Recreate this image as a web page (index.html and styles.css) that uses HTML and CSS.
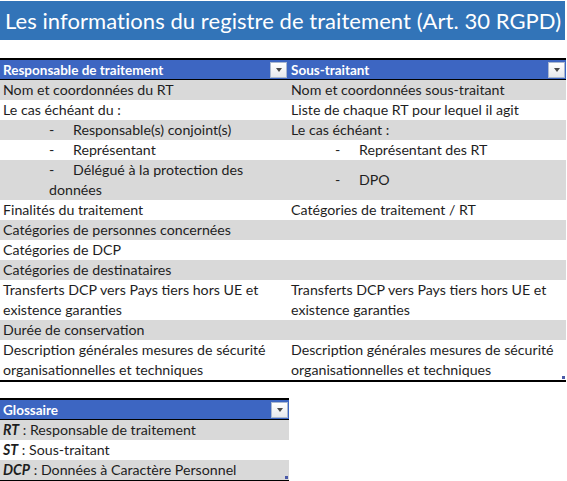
FILE: index.html
```html
<!DOCTYPE html>
<html lang="fr">
<head>
<meta charset="utf-8">
<title>Registre de traitement</title>
<link rel="stylesheet" href="styles.css">
</head>
<body>
<div class="title">Les informations du registre de traitement (Art. 30 RGPD)</div>

<table class="grid main">
  <colgroup><col class="c1"><col class="c2"></colgroup>
  <thead>
    <tr>
      <th><div class="hcell"><span>Responsable de traitement</span><span class="dd"></span></div></th>
      <th><div class="hcell"><span>Sous-traitant</span><span class="dd"></span></div></th>
    </tr>
  </thead>
  <tbody>
    <tr class="g"><td>Nom et coordonnées du RT</td><td>Nom et coordonnées sous-traitant</td></tr>
    <tr><td>Le cas échéant du :</td><td>Liste de chaque RT pour lequel il agit</td></tr>
    <tr class="g"><td class="ind"><span class="dash">-</span>Responsable(s) conjoint(s)</td><td>Le cas échéant :</td></tr>
    <tr><td class="ind"><span class="dash">-</span>Représentant</td><td class="ind2"><span class="dash">-</span>Représentant des RT</td></tr>
    <tr class="g"><td class="ind"><span class="dash">-</span>Délégué à la protection des<br>données</td><td class="ind2"><span class="dash">-</span>DPO</td></tr>
    <tr><td>Finalités du traitement</td><td>Catégories de traitement / RT</td></tr>
    <tr class="g"><td>Catégories de personnes concernées</td><td></td></tr>
    <tr><td>Catégories de DCP</td><td></td></tr>
    <tr class="g"><td>Catégories de destinataires</td><td></td></tr>
    <tr><td>Transferts DCP vers Pays tiers hors UE et<br>existence garanties</td><td>Transferts DCP vers Pays tiers hors UE et<br>existence garanties</td></tr>
    <tr class="g"><td>Durée de conservation</td><td></td></tr>
    <tr><td>Description générales mesures de sécurité<br>organisationnelles et techniques</td><td class="last">Description générales mesures de sécurité<br>organisationnelles et techniques<span class="grip"></span></td></tr>
  </tbody>
</table>

<table class="grid gloss">
  <thead>
    <tr><th><div class="hcell"><span>Glossaire</span><span class="dd"></span></div></th></tr>
  </thead>
  <tbody>
    <tr class="g"><td><b><i>RT</i></b> : Responsable de traitement</td></tr>
    <tr><td><b><i>ST</i></b> : Sous-traitant</td></tr>
    <tr class="g"><td class="last"><b><i>DCP</i></b> : Données à Caractère Personnel<span class="grip"></span></td></tr>
  </tbody>
</table>
</body>
</html>
```

FILE: styles.css
```css
html, body {
  margin: 0;
  padding: 0;
  background: #ffffff;
}
body {
  font-family: Lato, "Open Sans", sans-serif;
  color: #1e1e1e;
}
.title {
  margin-top: 1px;
  width: 565px;
  height: 39px;
  background: #3274b8;
  color: #ffffff;
  font-size: 22px;
  letter-spacing: 0.06px;
  line-height: 39px;
  padding-left: 5px;
  box-sizing: border-box;
  white-space: nowrap;
  overflow: hidden;
}
.grid {
  border-collapse: collapse;
  table-layout: fixed;
  font-size: 14.2px;
}
.main {
  width: 566px;
  margin-top: 18px;
}
.c1 { width: 288px; }
.c2 { width: 278px; }
.grid thead tr {
  border-top: 2px solid #000;
  border-bottom: 1px solid #000;
}
.grid th {
  background: #3d66c2;
  color: #fff;
  font-weight: bold;
  font-size: 13.5px;
  text-align: left;
  padding: 0;
  height: 19px;
}
.hcell {
  display: flex;
  align-items: center;
  justify-content: space-between;
  padding: 0 1px 0 3px;
  height: 19px;
}
.dd {
  width: 15px;
  height: 14px;
  border: 1px solid #aab8d0;
  background: linear-gradient(#ffffff, #e6e8ec);
  display: flex;
  align-items: center;
  justify-content: center;
}
.dd::after {
  content: "";
  border-left: 3.5px solid transparent;
  border-right: 3.5px solid transparent;
  border-top: 4px solid #4a4a4a;
}
.grid td {
  padding: 0 3px;
  line-height: 20px;
  height: 20px;
  vertical-align: middle;
  white-space: nowrap;
}
.grid tr.g td {
  background: #d9d9d9;
}
.grid tbody tr:last-child {
  border-bottom: 2px solid #000;
}
td.ind {
  padding-left: 49px;
}
td.ind2 {
  padding-left: 47px;
}
.dash {
  display: inline-block;
  width: 24px;
}
td.last {
  position: relative;
}
.grip {
  position: absolute;
  right: 1px;
  bottom: 1px;
  width: 3px;
  height: 3px;
  background: #4b5aa8;
}
.gloss {
  width: 289px;
  margin-top: 16px;
}
```
